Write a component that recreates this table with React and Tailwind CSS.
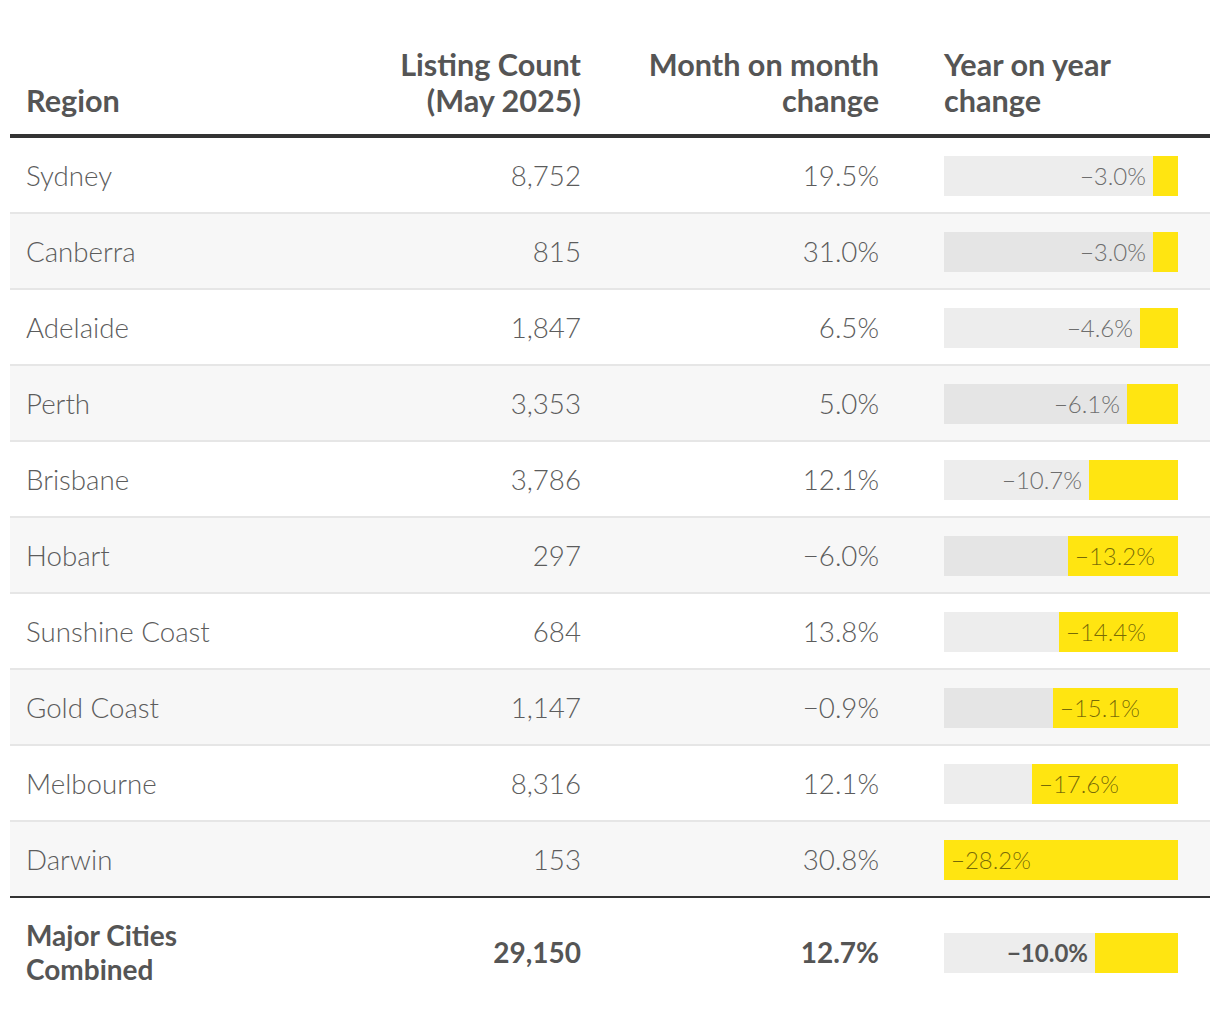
import React from 'react';

const rows = [
  { region: 'Sydney', count: '8,752', mom: '19.5%', yoy: 3.0 },
  { region: 'Canberra', count: '815', mom: '31.0%', yoy: 3.0 },
  { region: 'Adelaide', count: '1,847', mom: '6.5%', yoy: 4.6 },
  { region: 'Perth', count: '3,353', mom: '5.0%', yoy: 6.1 },
  { region: 'Brisbane', count: '3,786', mom: '12.1%', yoy: 10.7 },
  { region: 'Hobart', count: '297', mom: '−6.0%', yoy: 13.2 },
  { region: 'Sunshine Coast', count: '684', mom: '13.8%', yoy: 14.4 },
  { region: 'Gold Coast', count: '1,147', mom: '−0.9%', yoy: 15.1 },
  { region: 'Melbourne', count: '8,316', mom: '12.1%', yoy: 17.6 },
  { region: 'Darwin', count: '153', mom: '30.8%', yoy: 28.2 },
];

const MAX = 28.2;
const BAR_W = 234;
const light = { fontFamily: '"Lato Light", Lato, "Open Sans", sans-serif', fontWeight: 300 };

const Bar = ({ value, bold }) => {
  const w = Math.round((value / MAX) * BAR_W);
  const inside = value >= 12;
  const label = `−${value.toFixed(1)}%`;
  return (
    <div className="mt-[2px] flex h-10 w-[234px] bg-black/[0.07]">
      <div className="flex min-w-0 flex-1 items-center justify-end">
        {!inside && (
          <span
            className={`pr-[7px] text-[24px] ${bold ? 'font-bold text-[#555]' : 'text-[#6e6e6e]'}`}
            style={bold ? undefined : light}
          >
            {label}
          </span>
        )}
      </div>
      <div className="flex flex-none items-center bg-[#ffe511]" style={{ width: w }}>
        {inside && (
          <span className="whitespace-nowrap pl-[7px] text-[24px] text-black/55" style={light}>
            {label}
          </span>
        )}
      </div>
    </div>
  );
};

const App = () => {
  return (
    <div className="min-h-[1016px] bg-white px-[10px] pt-[47px] text-[#555]" style={{ fontFamily: 'Lato, "Open Sans", sans-serif' }}>
      {/* Header */}
      <div className="grid grid-cols-[320px_268px_298px_1fr] items-end border-b-4 border-[#333] pb-[15px] text-[30.6px] font-bold leading-[36px] text-[#555]">
        <div className="px-[16px]">Region</div>
        <div className="px-[17px] text-right">
          Listing Count
          <br />
          (May 2025)
        </div>
        <div className="px-[17px] text-right">
          Month on month
          <br />
          change
        </div>
        <div className="pl-[48px]">
          Year on year
          <br />
          change
        </div>
      </div>

      {/* Body */}
      {rows.map((r, i) => (
        <div
          key={r.region}
          className={`grid h-[76px] grid-cols-[320px_268px_298px_1fr] items-center text-[27.7px] text-[#5c5c5c] ${
            i === rows.length - 1 ? 'border-b-2 border-[#333]' : 'border-b-2 border-[#e6e6e6]'
          } ${i % 2 === 1 ? 'bg-[#f7f7f7]' : 'bg-white'}`}
          style={light}
        >
          <div className="px-[16px] pt-[2px]">{r.region}</div>
          <div className="px-[17px] pt-[2px] text-right">{r.count}</div>
          <div className="px-[17px] pt-[2px] text-right">{r.mom}</div>
          <div className="pl-[48px]">
            <Bar value={r.yoy} />
          </div>
        </div>
      ))}

      {/* Total */}
      <div className="grid grid-cols-[320px_268px_298px_1fr] items-center py-[20px] text-[28px] font-bold leading-[34px]">
        <div className="px-[16px]">
          Major Cities
          <br />
          Combined
        </div>
        <div className="px-[17px] text-right">29,150</div>
        <div className="px-[17px] text-right">12.7%</div>
        <div className="pl-[48px]">
          <Bar value={10.0} bold />
        </div>
      </div>
    </div>
  );
};

export default App;
